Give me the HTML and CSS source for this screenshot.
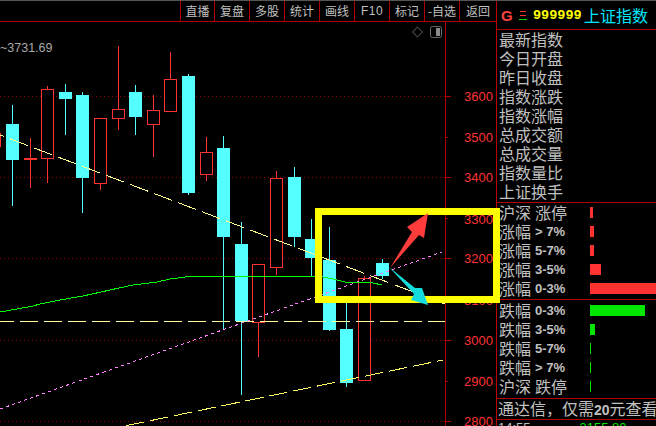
FILE: index.html
```html
<!DOCTYPE html>
<html lang="zh-CN">

<head>
    <meta charset="UTF-8">
    <title>上证指数</title>
    <link rel="stylesheet" href="styles.css">
</head>

<body>
    <div class="screen">
        <div class="chart">
            <nav class="toolbar">
                <span class="tool tool-first">直播</span>
                <span class="tool">复盘</span>
                <span class="tool">多股</span>
                <span class="tool">统计</span>
                <span class="tool">画线</span>
                <span class="tool tool-latin">F10</span>
                <span class="tool">标记</span>
                <span class="tool">-自选</span>
                <span class="tool tool-last">返回</span>
            </nav>

            <svg class="plot" width="496" height="404" viewBox="0 22 496 404">
                <!-- price axis -->
                <path class="grid" d="M0 96.5H445M0 177.5H445M0 258.5H445M0 340.5H445M0 421.5H445" />
                <path class="axis" d="M445.5 22V426M445 96.5H451M445 137.5H448M445 177.5H451M445 218.5H448M445 258.5H451M445 299.5H448M445 340.5H451M445 381.5H448M445 421.5H451" />
                <text class="price" x="464" y="101">3600</text>
                <text class="price" x="464" y="142">3500</text>
                <text class="price" x="464" y="182">3400</text>
                <text class="price" x="464" y="224">3300</text>
                <text class="price" x="464" y="263">3200</text>
                <text class="price" x="464" y="305">3100</text>
                <text class="price" x="464" y="345">3000</text>
                <text class="price" x="464" y="386">2900</text>
                <text class="price" x="464" y="426">2800</text>
                <text class="high-mark" x="0" y="52">~3731.69</text>

                <!-- corner icons -->
                <polygon class="icon-line" points="417.5,27 422.5,32 417.5,37 412.5,32" />
                <rect class="icon-line" x="430.5" y="26.5" width="11" height="11" rx="2" />
                <rect class="icon-fill" x="436" y="28" width="4" height="8" />

                <!-- falling days -->
                <path class="wick-fall" d="M12.5 105V206M65.5 84V135M82.5 92V213M135.5 85V135M188.5 74V195M223.5 136V330M241.5 222V395M294.5 167V247M311.5 219V276M329.5 227V331M346.5 303V387M382.5 259V279" />
                <rect class="body-fall" x="6" y="124" width="13" height="36" />
                <rect class="body-fall" x="59" y="92" width="13" height="7" />
                <rect class="body-fall" x="76" y="95" width="13" height="83" />
                <rect class="body-fall" x="129" y="92" width="13" height="25" />
                <rect class="body-fall" x="182" y="76" width="13" height="117" />
                <rect class="body-fall" x="217" y="148" width="13" height="89" />
                <rect class="body-fall" x="235" y="244" width="13" height="77" />
                <rect class="body-fall" x="288" y="177" width="13" height="60" />
                <rect class="body-fall" x="305" y="239" width="13" height="19" />
                <rect class="body-fall" x="323" y="260" width="13" height="70" />
                <rect class="body-fall" x="340" y="329" width="13" height="54" />
                <rect class="body-fall" x="376" y="263" width="13" height="13" />

                <!-- rising days -->
                <path class="wick-rise" d="M30.5 138V188M47.5 86V89M47.5 159V183M100.5 184V190M118.5 46V109M118.5 119V130M153.5 95V110M153.5 125V157M170.5 52V79M206.5 137V152M206.5 175V181M258.5 322V357M276.5 171V178M276.5 268V275M364.5 276V278" />
                <rect class="doji" x="24" y="158" width="13" height="2" />
                <rect class="body-rise" x="0" y="133.5" width="0.5" height="13" />
                <rect class="body-rise" x="41.5" y="89.5" width="12" height="69" />
                <rect class="body-rise" x="94.5" y="118.5" width="12" height="65" />
                <rect class="body-rise" x="112.5" y="109.5" width="12" height="9" />
                <rect class="body-rise" x="147.5" y="110.5" width="12" height="14" />
                <rect class="body-rise" x="164.5" y="79.5" width="12" height="32" />
                <rect class="body-rise" x="200.5" y="152.5" width="12" height="22" />
                <rect class="body-rise" x="252.5" y="264.5" width="12" height="58" />
                <rect class="body-rise" x="270.5" y="178.5" width="12" height="89" />
                <rect class="body-rise" x="358.5" y="278.5" width="12" height="102" />

                <!-- trend lines and moving average -->
                <line class="trend trend-down" x1="-14" y1="129.7" x2="445" y2="304" />
                <line class="trend trend-up" x1="126" y1="425.7" x2="443" y2="360" />
                <line class="trend trend-flat" x1="-4" y1="321.5" x2="445" y2="321.5" />
                <line class="trend trend-pink" x1="0" y1="409" x2="442" y2="252" />
                <polyline class="average" points="0,312 17,309 33,306 40,304 60,300 83,296 110,290 133,285 157,282 170,279 193,276 233,276 250,277 267,276 303,276 323,277 333,279 345,282 357,282 373,283 382,285" />
            </svg>
        </div>

        <aside class="panel">
            <div class="panel-head">
                <span class="head-key">G</span>
                <svg class="head-menu" width="8" height="10" viewBox="0 0 8 10">
                    <path class="menu-top" d="M1 1.5H7M1 5.5H7" />
                    <path class="menu-low" d="M0 9.5H8" />
                </svg>
                <span class="head-code">999999</span>
                <span class="head-name">上证指数</span>
            </div>

            <div class="quote-list">
                <div class="quote-row">最新指数</div>
                <div class="quote-row">今日开盘</div>
                <div class="quote-row">昨日收盘</div>
                <div class="quote-row">指数涨跌</div>
                <div class="quote-row">指数涨幅</div>
                <div class="quote-row">总成交额</div>
                <div class="quote-row">总成交量</div>
                <div class="quote-row">指数量比</div>
                <div class="quote-row">上证换手</div>
            </div>

            <div class="range-list range-rise">
                <div class="range-row"><span class="range-name">沪深</span><span class="range-tag">涨停</span><span class="range-bar" style="width: 3px"></span></div>
                <div class="range-row"><span class="range-name">涨幅</span><span class="range-val">&gt; 7%</span><span class="range-bar" style="width: 4px"></span></div>
                <div class="range-row"><span class="range-name">涨幅</span><span class="range-val">5-7%</span><span class="range-bar" style="width: 4px"></span></div>
                <div class="range-row"><span class="range-name">涨幅</span><span class="range-val">3-5%</span><span class="range-bar" style="width: 11px"></span></div>
                <div class="range-row"><span class="range-name">涨幅</span><span class="range-val">0-3%</span><span class="range-bar" style="width: 66px"></span></div>
            </div>

            <div class="range-list range-fall">
                <div class="range-row"><span class="range-name">跌幅</span><span class="range-val">0-3%</span><span class="range-bar" style="width: 55px"></span></div>
                <div class="range-row"><span class="range-name">跌幅</span><span class="range-val">3-5%</span><span class="range-bar" style="width: 5px"></span></div>
                <div class="range-row"><span class="range-name">跌幅</span><span class="range-val">5-7%</span><span class="range-bar" style="width: 1px"></span></div>
                <div class="range-row"><span class="range-name">跌幅</span><span class="range-val">&gt; 7%</span><span class="range-bar" style="width: 1px"></span></div>
                <div class="range-row"><span class="range-name">沪深</span><span class="range-tag">跌停</span><span class="range-bar" style="width: 1px"></span></div>
            </div>

            <div class="promo">通达信，仅需<b>20</b>元查看</div>

            <div class="tick-row">
                <span class="tick-time">14:55</span>
                <span class="tick-price">3155.80</span>
            </div>
        </aside>

        <!-- hand drawn marks on top of the window -->
        <svg class="marks" width="656" height="426" viewBox="0 0 656 426">
            <rect class="mark-box" x="318.5" y="211.5" width="178" height="88" />
            <polygon class="mark-up" points="390,268 412,232 407,227 428,213 424,238 419,235" />
            <polygon class="mark-down" points="389,267 415,288 422,288 428,305 411,300 414,294" />
        </svg>
    </div>
</body>

</html>
```

FILE: styles.css
```css
* {
    box-sizing: border-box;
}

body {
    margin: 0;
    background: black;
}

.screen {
    position: relative;
    display: flex;
    width: 656px;
    height: 426px;
    overflow: hidden;
    background: black;
    border-top: 1px solid #555555;
    font-family: "Noto Sans CJK SC", "Liberation Sans", sans-serif;
    color: #c0c0c0;
}

.chart {
    width: 496px;
    flex: none;
}

.toolbar {
    display: flex;
    justify-content: flex-end;
    height: 21px;
    border-bottom: 1px solid #b00000;
}

.tool {
    width: 35px;
    border-left: 1px solid #b00000;
    font-size: 12px;
    line-height: 20px;
    text-align: center;
}

.tool-first {
    width: 34px;
}

.tool-last {
    width: 37px;
}

.tool-latin {
    font-family: "Liberation Sans", sans-serif;
    letter-spacing: 0.5px;
}

.plot {
    display: block;
}

.grid {
    fill: none;
    stroke: #900000;
    stroke-dasharray: 1 3;
    shape-rendering: crispEdges;
}

.axis {
    fill: none;
    stroke: #b00000;
    shape-rendering: crispEdges;
}

.price {
    fill: #ff3232;
    font-family: "Liberation Sans", sans-serif;
    font-size: 13px;
}

.high-mark {
    fill: #a8a8a8;
    font-family: "Liberation Sans", sans-serif;
    font-size: 12.5px;
}

.icon-line {
    fill: none;
    stroke: #6a6a6a;
}

.icon-fill {
    fill: #8a8a8a;
}

.wick-fall {
    fill: none;
    stroke: #54ffff;
    shape-rendering: crispEdges;
}

.body-fall {
    fill: #54ffff;
}

.wick-rise {
    fill: none;
    stroke: #ff3232;
    shape-rendering: crispEdges;
}

.body-rise {
    fill: black;
    stroke: #ff3232;
    shape-rendering: crispEdges;
}

.doji {
    fill: #ff3232;
}

.trend {
    stroke-width: 1;
    shape-rendering: crispEdges;
}

.trend-down {
    stroke: #ffff90;
    stroke-dasharray: 19.2 6.5;
}

.trend-up {
    stroke: #ffff60;
    stroke-dasharray: 18.4 6;
}

.trend-flat {
    stroke: #ffffa0;
    stroke-dasharray: 18 6;
}

.trend-pink {
    stroke: #ff80ff;
    stroke-dasharray: 3.2 3.2;
}

.average {
    fill: none;
    stroke: #00ff00;
    shape-rendering: crispEdges;
}

.panel {
    flex: 1;
    min-width: 0;
    overflow: hidden;
    border-left: 1px solid #c00000;
}

.panel-head {
    display: flex;
    align-items: center;
    height: 29px;
    padding-left: 4px;
    border-bottom: 1px solid #b00000;
}

.head-key {
    width: 18px;
    color: #ff4040;
    font-family: "Liberation Sans", sans-serif;
    font-size: 15px;
    font-weight: bold;
}

.head-menu {
    flex: none;
    margin-right: 6px;
}

.menu-top {
    stroke: #ff3232;
}

.menu-low {
    stroke: #00e000;
}

.head-code {
    width: 51px;
    color: #ffff00;
    font-family: "Liberation Mono", monospace;
    font-size: 13.5px;
    font-weight: bold;
}

.head-name {
    color: #00e8ff;
    font-size: 16px;
}

.quote-list {
    height: 173px;
    padding: 1px 0 0 2px;
    border-bottom: 1px solid #b00000;
}

.quote-row {
    height: 19px;
    font-size: 16px;
    line-height: 17px;
}

.range-list {
    height: 97px;
    padding-left: 2px;
    border-bottom: 1px solid #b00000;
}

.range-fall {
    height: 99px;
    padding-top: 1px;
}

.range-row {
    display: flex;
    align-items: center;
    height: 19px;
    font-size: 16px;
    line-height: 19px;
}

.range-name {
    width: 36px;
    flex: none;
    align-self: flex-start;
}

.range-tag,
.range-val {
    width: 55px;
    flex: none;
    align-self: flex-start;
}

.range-val {
    font-family: "Liberation Sans", sans-serif;
    font-size: 13px;
    font-weight: bold;
}

.range-bar {
    height: 11px;
}

.range-rise .range-bar {
    background: #ff3232;
}

.range-fall .range-bar {
    background: #00e600;
}

.promo {
    height: 21px;
    padding-left: 1px;
    border-bottom: 1px solid #b00000;
    font-size: 16px;
    line-height: 19px;
    white-space: nowrap;
}

.promo b {
    font-family: "Liberation Sans", sans-serif;
    font-size: 14px;
}

.tick-row {
    display: flex;
    gap: 49px;
    padding-left: 1px;
    font-family: "Liberation Sans", sans-serif;
    font-size: 13px;
    line-height: 16px;
}

.tick-price {
    color: #00e600;
}

.marks {
    position: absolute;
    top: -1px;
    left: 0;
}

.mark-box {
    fill: none;
    stroke: #ffff00;
    stroke-width: 7;
    shape-rendering: crispEdges;
}

.mark-up {
    fill: #ff3c3c;
}

.mark-down {
    fill: #14dcdc;
}
```
